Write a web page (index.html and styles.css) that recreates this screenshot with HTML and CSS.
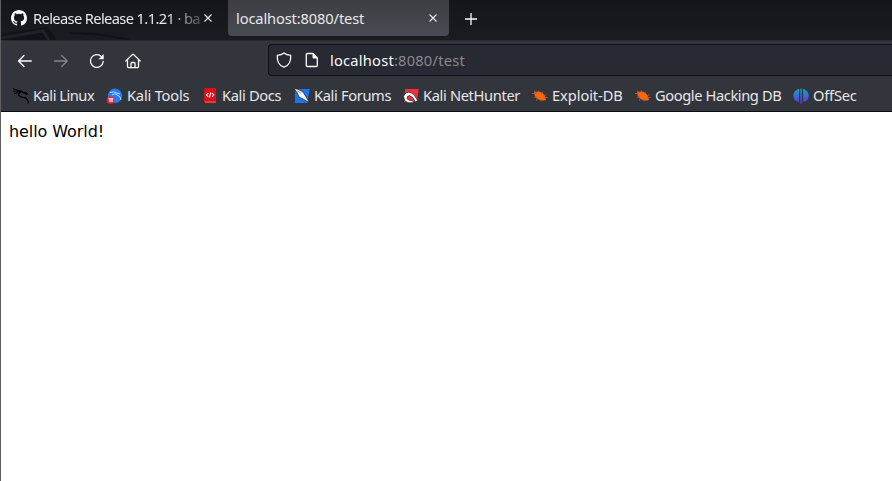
FILE: index.html
```html
<!DOCTYPE html>
<html lang="en">
<head>
<meta charset="utf-8">
<title>localhost:8080/test</title>
<link rel="stylesheet" href="styles.css">
</head>
<body>
<div class="browser">
  <header class="tabs">
    <svg class="wallpaper" width="228" height="40" viewBox="0 0 228 40" fill="none"><path d="M0 34L47 27L55 40H0Z" fill="#121317"/><path d="M0 38L42 31L48 40" stroke="#202126" stroke-width="3"/><path d="M68 33Q100 33 128 40" stroke="#121317" stroke-width="2"/></svg>
    <div class="tab">
      <svg class="github" width="16" height="16" viewBox="0 0 16 16" fill="#fbfbfe"><path d="M8 0C3.58 0 0 3.58 0 8c0 3.54 2.29 6.53 5.47 7.59.4.07.55-.17.55-.38 0-.19-.01-.82-.01-1.49-2.01.37-2.53-.49-2.69-.94-.09-.23-.48-.94-.82-1.13-.28-.15-.68-.52-.01-.53.63-.01 1.08.58 1.23.82.72 1.21 1.87.87 2.33.66.07-.52.28-.87.51-1.07-1.78-.2-3.64-.89-3.64-3.95 0-.87.31-1.59.82-2.15-.08-.2-.36-1.02.08-2.12 0 0 .67-.21 2.2.82a7.6 7.6 0 0 1 4 0c1.53-1.04 2.2-.82 2.2-.82.44 1.1.16 1.92.08 2.12.51.56.82 1.27.82 2.15 0 3.07-1.87 3.75-3.65 3.95.29.25.54.73.54 1.48 0 1.07-.01 1.93-.01 2.2 0 .21.15.46.55.38A8 8 0 0 0 16 8c0-4.42-3.58-8-8-8z"/></svg>
      <span class="label fade">Release Release 1.1.21 · ba</span>
      <svg class="close" width="8" height="8" viewBox="0 0 8 8"><path d="M.5.5l7 7m0-7l-7 7"/></svg>
    </div>
    <div class="tab active">
      <span class="label">localhost:8080/test</span>
      <svg class="close" width="8" height="8" viewBox="0 0 8 8"><path d="M.5.5l7 7m0-7l-7 7"/></svg>
    </div>
    <svg class="plus" width="12" height="12" viewBox="0 0 12 12"><path d="M6 0v12M0 6h12"/></svg>
  </header>
  <nav class="toolbar">
    <div class="buttons">
      <svg class="icon" width="16" height="16" viewBox="0 0 16 16"><path d="M14.3 8H1.5M7 2.5L1.5 8L7 13.5"/></svg>
      <svg class="icon dim" width="16" height="16" viewBox="0 0 16 16"><path d="M1.5 8h12.5M8.7 2.5L14.2 8L8.7 13.5"/></svg>
      <svg class="icon" width="16" height="16" viewBox="0 0 16 16"><path d="M14.2 8.5A6.4 6.4 0 1 1 12.5 3.6"/><path d="M14.7 1v5.2H9.5Z" fill="#fbfbfe" stroke="none"/></svg>
      <svg class="icon" width="16" height="16" viewBox="0 0 16 16"><path d="M.8 8L7.3 1.6Q8 1 8.7 1.6L15.2 8M2.5 7v6.4q0 1.3 1.3 1.3h8.4q1.3 0 1.3-1.3V7M6 14.5v-4q0-1 1-1h2q1 0 1 1v4"/></svg>
    </div>
    <div class="address">
      <svg class="icon" width="16" height="16" viewBox="0 0 16 16"><path d="M8 .9C6 2.5 3.8 3.1 1.3 3.4C1 9 3.2 13.8 8 15.2C12.8 13.8 15 9 14.7 3.4C12.2 3.1 10 2.5 8 .9Z"/></svg>
      <svg class="icon" width="16" height="16" viewBox="0 0 16 16"><path d="M3.5 1.5H9l4.3 4.5v7.3q0 1.2-1.2 1.2H3.5q-1.2 0-1.2-1.2V2.7q0-1.2 1.2-1.2Z"/><path d="M8.5 1L14 6.5H9.5q-1 0-1-1Z" fill="#fbfbfe" stroke="none"/></svg>
      <span class="url">localhost<i>:8080/test</i></span>
    </div>
  </nav>
  <nav class="bookmarks">
    <a class="b1"><svg width="16" height="16" viewBox="0 0 16 16" fill="none" stroke="#030407"><path d="M0 .7L5 2.3L10 3.6M0 3L6 3.2M1 5.7L5.5 4.4" stroke-width="1"/><path d="M4 3.2Q8 2.5 11 5L14 6.3M8 3.6Q4.7 5.2 6 7.8Q8 9.7 12 9.7Q15 11 15.4 15.2" stroke-width="1.4"/><path d="M9 4.5L13 4L15 6.5"/></svg><span>Kali Linux</span></a>
    <a class="b2"><svg width="16" height="16" viewBox="0 0 16 16"><circle cx="8" cy="7.8" r="7.2" fill="#267af4"/><path d="M3 4.5Q7 2.8 10 5.2L13 6M5 7Q8 4.5 10 7Q14 8 14 12" fill="none" stroke="#b9dcff" stroke-width="1"/><rect y="8.5" width="7.3" height="7.3" rx="3" fill="#ee2535"/><path d="M1.5 10.8h4.8M3 11v3M5 11v3" stroke="#fff" stroke-width="1.1"/></svg><span>Kali Tools</span></a>
    <a class="b3"><svg width="16" height="16" viewBox="0 0 16 16"><path d="M3 0h11v15.5H2V1.5Z" fill="#d91018"/><path d="M2 14h12v2H2Z" fill="#8f141c"/><path d="M3 14.1h11" stroke="#bbb" stroke-width=".7"/><path d="M6.3 5L4.5 7l1.8 2M10 5l1.8 2L10 9M8.8 4.5L7.4 9.5" fill="none" stroke="#fff" stroke-width="1.1"/></svg><span>Kali Docs</span></a>
    <a class="b4"><svg width="16" height="16" viewBox="0 0 16 16"><path d="M1 1h14.7L13.2 15H1Z" fill="#1975ee"/><path d="M0 .6L4 1.2L9 4L12 8.8L15.5 14.8L10 11.5L5 9L3.3 5Z" fill="#f6f6f6" stroke="#14171c" stroke-width=".7"/><path d="M3 2.7L7 5.3" stroke="#555" stroke-width=".6"/></svg><span>Kali Forums</span></a>
    <a class="b5"><svg width="16" height="16" viewBox="0 0 16 16"><path d="M2 1h13.7L14 13.5L1 14Z" fill="#f12f3b"/><path d="M.5 8.5Q2.5 3 8 4.5Q11.5 6.5 15 12.8L12.5 14Q9.5 8.2 6.5 7.5Q3.8 8 4.2 10.8Q5.7 13 9 12.3L11 14.7Q4.5 15.5 1.8 13Z" fill="#fff" stroke="#17171c" stroke-width=".7"/></svg><span>Kali NetHunter</span></a>
    <a class="b6"><svg width="16" height="16" viewBox="0 0 16 16"><path d="M2 4.5Q6 2.5 10.5 5Q13.5 7.5 14 12Q9 13.5 5 10.8Q2 8 2 4.5Z" fill="#f26711"/><path d="M0 5.5h4M2 2.8l3 2M6.5 2.5l.7 2M10.5 3.7l-1 2M12 7.5l2.5-.7M12 9.4h3.5M2 9.5l3-1M5.5 10l-1 2.5M9 11v2.5" stroke="#c9581a" stroke-width=".9"/></svg><span>Exploit-DB</span></a>
    <a class="b7"><svg width="16" height="16" viewBox="0 0 16 16"><path d="M2 4.5Q6 2.5 10.5 5Q13.5 7.5 14 12Q9 13.5 5 10.8Q2 8 2 4.5Z" fill="#f26711"/><path d="M0 5.5h4M2 2.8l3 2M6.5 2.5l.7 2M10.5 3.7l-1 2M12 7.5l2.5-.7M12 9.4h3.5M2 9.5l3-1M5.5 10l-1 2.5M9 11v2.5" stroke="#c9581a" stroke-width=".9"/></svg><span>Google Hacking DB</span></a>
    <a class="b8"><svg width="16" height="16" viewBox="0 0 16 16"><defs><linearGradient id="off" x2="0" y2="1"><stop stop-color="#11a6bb"/><stop offset="1" stop-color="#622ee0"/></linearGradient></defs><path d="M6 .8V14.3Q.3 12.8.3 7.8T6 .8ZM7.3 .8h1.5V15.7H7.3ZM10.1.8Q15.8 2.8 15.8 7.8T10.1 14.3Z" fill="url(#off)"/></svg><span>OffSec</span></a>
  </nav>
  <main>hello World!</main>
</div>
</body>
</html>
```
FILE: styles.css
```css
* { box-sizing: border-box; }
body { margin: 0; background: #fff; }
.browser { height: 481px; border-left: 1px solid #606062; font: 14.67px/20px "Noto Sans", sans-serif; color: #e7e7ea; overflow: hidden; }
svg { display: block; flex: none; }
span { white-space: nowrap; }
.tabs { position: relative; height: 40px; display: flex; align-items: flex-start; background: linear-gradient(#15161b, #1b1c21); }
.wallpaper { position: absolute; left: 0; top: 0; }
.tab { position: relative; display: flex; align-items: center; height: 36px; width: 227px; padding: 0 16px 0 10px; }
.github { margin-right: 6px; }
.label { flex: 1; min-width: 0; letter-spacing: -.13px; }
.fade { letter-spacing: -.62px; -webkit-mask-image: linear-gradient(90deg, #000 132px, transparent 180px); mask-image: linear-gradient(90deg, #000 132px, transparent 180px); }
.active { width: 221px; padding: 0 12px 0 8px; border-radius: 0 0 4px 4px; background: linear-gradient(#3d3e44, #484b52); }
.close { fill: none; stroke: #ededf0; stroke-width: 1.1; }
.plus { margin: 13px 0 0 16px; stroke: #fbfbfe; stroke-width: 1.3; }
.toolbar { display: flex; height: 41px; padding-top: 3px; border-top: 1px solid #292a30; background: #33353c; }
.buttons { display: flex; align-items: center; gap: 20px; width: 267px; height: 33px; padding-left: 16px; }
.icon { fill: none; stroke: #fbfbfe; stroke-width: 1.3; stroke-linecap: round; stroke-linejoin: round; }
.dim { opacity: .4; }
.address { flex: 1; display: flex; align-items: center; gap: 12px; height: 32px; padding-left: 7px; background: #272933; border: 1px solid #101116; border-right: 0; border-radius: 4px 0 0 4px; }
.url { margin-left: -2px; letter-spacing: .22px; color: #fbfbfe; }
.url i { font-style: normal; color: #898a92; }
.bookmarks { display: flex; height: 31px; background: #33353c; border-bottom: 1px solid #0c0d12; padding-left: 12px; }
.bookmarks a { display: flex; align-items: center; flex: none; gap: 4px; height: 30px; letter-spacing: -.35px; }
.bookmarks span { padding-bottom: 2px; }
.bookmarks .b1 { width: 94px; letter-spacing: -.48px; }
.bookmarks .b2 { width: 95px; letter-spacing: -.2px; }
.b3 { width: 92px; }
.b4 { width: 109px; }
.b5 { width: 129px; }
.bookmarks .b6 { width: 103px; letter-spacing: -.08px; }
.bookmarks .b7 { width: 158px; letter-spacing: -.4px; }
.bookmarks .b8 { letter-spacing: -.2px; }
main { padding: 10px 8px; color: #000; font: 16px/19px "DejaVu Sans", sans-serif; letter-spacing: -.08px; }
```
